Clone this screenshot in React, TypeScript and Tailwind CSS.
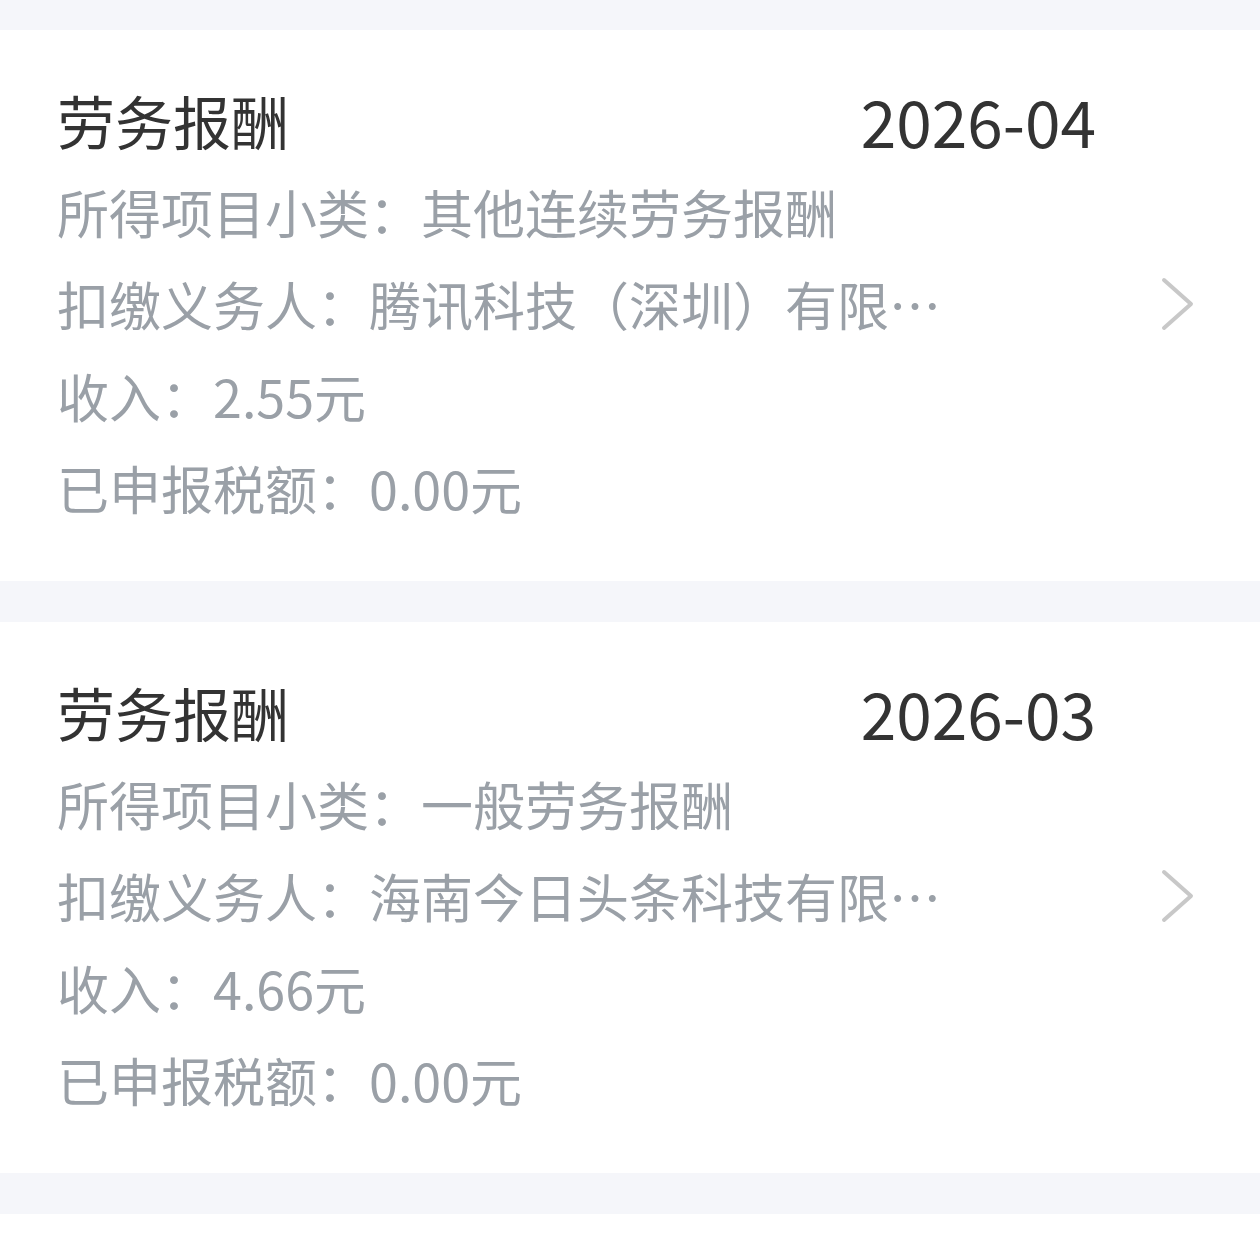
import React from "react";

type Record = {
  title: string;
  month: string;
  subtype: string;
  payer: string;
  income: string;
  tax: string;
};

const records: Record[] = [
  {
    title: "劳务报酬",
    month: "2026-04",
    subtype: "其他连续劳务报酬",
    payer: "腾讯科技（深圳）有限公司",
    income: "2.55元",
    tax: "0.00元",
  },
  {
    title: "劳务报酬",
    month: "2026-03",
    subtype: "一般劳务报酬",
    payer: "海南今日头条科技有限公司",
    income: "4.66元",
    tax: "0.00元",
  },
];

function Chevron() {
  return (
    <svg width="36" height="56" viewBox="0 0 36 56" fill="none" className="shrink-0">
      <polyline
        points="4,4 31,28 4,52"
        stroke="#c8c8c8"
        strokeWidth="4"
        strokeLinecap="round"
        strokeLinejoin="round"
      />
    </svg>
  );
}

function RecordCard({ r }: { r: Record }) {
  return (
    <div className="bg-white pl-[57px] pr-[64px] pt-[44px] pb-[47px] flex items-center">
      <div className="flex-1 min-w-0">
        <div className="flex items-center justify-between w-[1039px] h-[92px]">
          <span className="text-[58px] leading-[92px] text-[#333333]">{r.title}</span>
          <span className="text-[64px] leading-[92px] text-[#333333]">{r.month}</span>
        </div>
        <div className="text-[52px] leading-[92px] text-[#9aa0a7]">
          <p>所得项目小类：{r.subtype}</p>
          <p className="w-[900px] truncate">扣缴义务人：{r.payer}</p>
          <p>收入：{r.income}</p>
          <p>已申报税额：{r.tax}</p>
        </div>
      </div>
      <Chevron />
    </div>
  );
}

export default function App() {
  return (
    <div
      className="w-[1260px] min-h-[1234px] bg-white"
      style={{ fontFamily: '"Noto Sans CJK SC", "Noto Sans", sans-serif' }}
    >
      <div className="h-[30px] bg-[#f5f6fa]" />
      {records.map((r, i) => (
        <React.Fragment key={i}>
          <RecordCard r={r} />
          <div className="h-[41px] bg-[#f5f6fa]" />
        </React.Fragment>
      ))}
    </div>
  );
}
